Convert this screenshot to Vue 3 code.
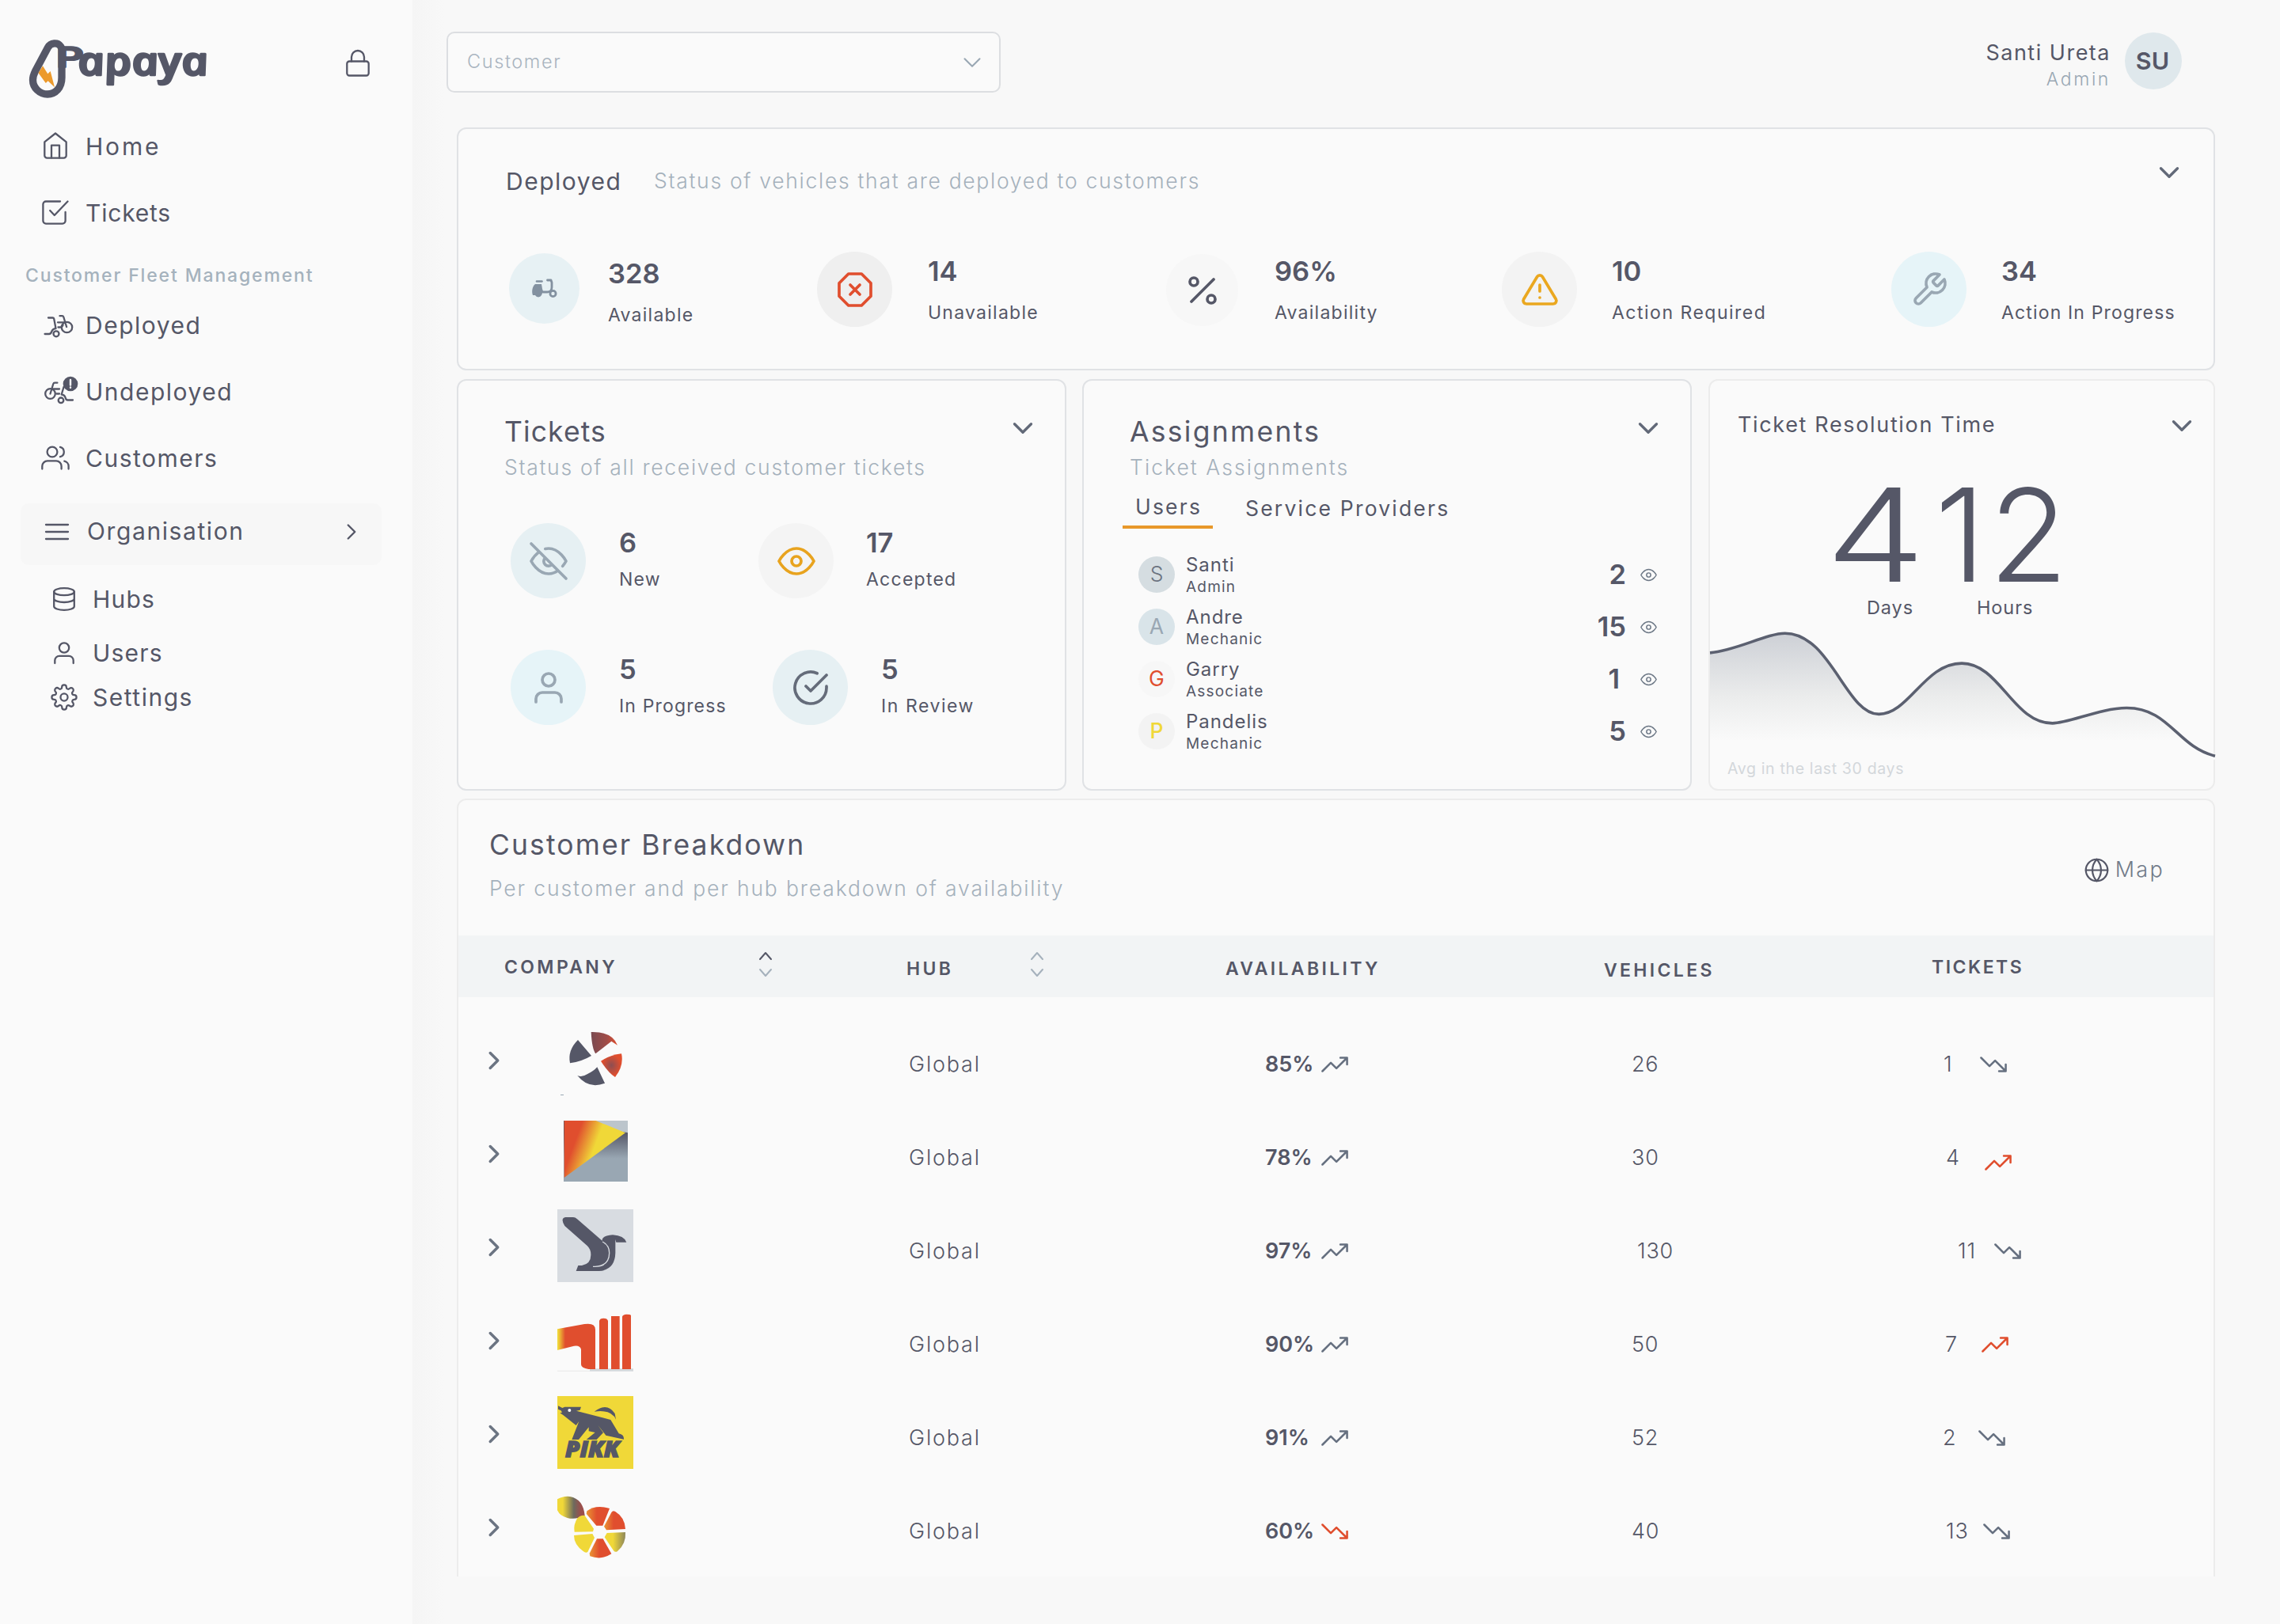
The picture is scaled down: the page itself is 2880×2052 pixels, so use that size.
<script setup>
const icons = {
  lock: { box: '0 0 30 34', body: '<rect x="1.3" y="14.5" width="27.4" height="18" rx="3"/><path d="M7 14.5V9a8 8 0 0 1 16 0v5.5"/>' },
  home: { box: '0 0 30 34', body: '<path d="M1.3 12.4 15 1.5l13.7 10.9v17a3.2 3.2 0 0 1-3.2 3.2h-21a3.2 3.2 0 0 1-3.2-3.2z"/><path d="M10 32.4V16.6h10v15.8"/>' },
  check: { box: '0 0 34 31', body: '<path d="M23 1.5H5A3.6 3.6 0 0 0 1.4 5v21A3.6 3.6 0 0 0 5 29.6h21a3.6 3.6 0 0 0 3.6-3.6V15"/><path d="m10.200 13 5.600 6L32.500 1.500"/>' },
  trike: { box: '0 0 36 28', body: '<path d="M5 3.500h5.500c1 0 1.500.4 1.700 1.300L14.500 17c-3 .2-4.500 1.800-5.500 4.500-.6 1.600-1.300 2.500-3 2.500H.6"/><circle cx="15" cy="23.800" r="3.500"/><circle cx="28.500" cy="15.500" r="6.700"/><path d="M19.500 1.200h3c1 0 1.500.4 1.800 1.300l3.800 12.500M17 9.300h10M17.500 15.500h3.200c1.500 0 2-1 2.800-2.800"/>' },
  trikeAlert: { box: '0 0 42 34', body: '<circle cx="7.500" cy="21.500" r="6.300"/><path d="M7.500 21.500 11.300 9c.3-.9.8-1.300 1.800-1.300h3.300M9 15.500h10M15.500 21.500h3.500M24.500 13 21.700 22.500c3 .2 4.300 1.500 5 4.300.4 1.800 1 2.700 2.700 2.700H36"/><circle cx="21" cy="29.800" r="3.300"/><circle class="solid" cx="33" cy="9" r="8.200"/><path class="knock" d="M33 4v6.500M33 13.500v.3"/>' },
  users: { box: '0 0 36 30', body: '<circle cx="14" cy="8" r="6.400"/><path d="M24 1.800a6.400 6.400 0 0 1 0 12.400M1.300 29.500V26a6.600 6.600 0 0 1 6.600-6.600H19a6.600 6.600 0 0 1 6.600 6.600v3.500M29.300 19.600a6.600 6.600 0 0 1 5.300 6.500v3.400"/>' },
  menu: { box: '0 0 30 22', body: '<path d="M1 2h28M1 11h28M1 20h28"/>' },
  hubs: { box: '0 0 28 30', body: '<ellipse cx="14" cy="5.700" rx="12.800" ry="4.500"/><path d="M1.200 5.700v18.600c0 2.500 5.700 4.500 12.800 4.500s12.800-2 12.800-4.500V5.700M1.200 14.500c0 2.500 5.700 4.500 12.800 4.500s12.800-2 12.800-4.500"/>' },
  person: { box: '0 0 26 28', body: '<circle cx="13" cy="7.500" r="6.200"/><path d="M1.300 27v-3.500a5.700 5.700 0 0 1 5.700-5.700h12a5.700 5.700 0 0 1 5.700 5.700V27"/>' },
  gear: { box: '0 0 24 24', body: '<circle cx="12" cy="12" r="3.200"/><path d="M19.400 15a1.650 1.650 0 0 0 .33 1.820l.06.06a2 2 0 1 1-2.830 2.830l-.06-.06a1.650 1.650 0 0 0-2.800 1.170V21a2 2 0 1 1-4 0v-.09a1.650 1.650 0 0 0-2.900-1.260l-.06.06a2 2 0 1 1-2.830-2.830l.06-.06A1.650 1.650 0 0 0 3.100 14H3a2 2 0 1 1 0-4h.09a1.650 1.650 0 0 0 1.260-2.900l-.06-.06a2 2 0 1 1 2.830-2.830l.06.06A1.650 1.650 0 0 0 10 3.100V3a2 2 0 1 1 4 0v.09a1.650 1.650 0 0 0 2.820 1.180l.06-.06a2 2 0 1 1 2.830 2.830l-.06.06A1.650 1.650 0 0 0 20.910 10H21a2 2 0 1 1 0 4h-.09a1.650 1.650 0 0 0-1.510 1z"/>' },
  right: { box: '0 0 24 24', body: '<path d="m9 18 6-6-6-6"/>' },
  down: { box: '0 0 24 24', body: '<path d="m6 9 6 6 6-6"/>' },
  scooter: { box: '0 0 32 25', body: '<path class="solid" stroke="none" d="M4 7h8l1 6 1 3-2 5a4.500 4.500 0 0 1-8 0H1c-1.500-4-1-11 3-14z"/><path d="M6 3.500h6.500" stroke-width="2.600"/><path d="M19.500 2H24l1 3v6c0 3-2 6-5.500 6H14" stroke-width="2.800"/><circle cx="26.500" cy="19" r="3.600" stroke-width="2.800"/>' },
  octagon: { box: '0 0 24 24', body: '<path d="M7.860 2h8.280L22 7.860v8.280L16.140 22H7.860L2 16.140V7.860zM15 9l-6 6M9 9l6 6"/>' },
  percent: { box: '0 0 24 24', body: '<path d="M19 5 5 19"/><circle cx="6.500" cy="6.500" r="2.500"/><circle cx="17.500" cy="17.500" r="2.500"/>' },
  warn: { box: '0 0 24 24', body: '<path d="M10.290 3.860 1.820 18a2 2 0 0 0 1.710 3h16.940a2 2 0 0 0 1.710-3L13.710 3.860a2 2 0 0 0-3.420 0zM12 9v4M12 17h.01"/>' },
  wrench: { box: '0 0 24 24', body: '<path d="M14.700 6.300a1 1 0 0 0 0 1.400l1.600 1.600a1 1 0 0 0 1.400 0l3.770-3.770a6 6 0 0 1-7.940 7.940l-6.910 6.910a2.120 2.120 0 0 1-3-3l6.910-6.910a6 6 0 0 1 7.940-7.940z"/>' },
  eyeOff: { box: '0 0 24 24', body: '<path d="M17.940 17.940A10.070 10.070 0 0 1 12 20c-7 0-11-8-11-8a18.450 18.450 0 0 1 5.060-5.940M9.900 4.240A9.120 9.120 0 0 1 12 4c7 0 11 8 11 8a18.500 18.500 0 0 1-2.160 3.190m-6.720-1.070a3 3 0 1 1-4.240-4.240M1 1l22 22"/>' },
  eye: { box: '0 0 24 24', body: '<path d="M1 12s4-8 11-8 11 8 11 8-4 8-11 8-11-8-11-8z"/><circle cx="12" cy="12" r="3"/>' },
  user: { box: '0 0 24 24', body: '<path d="M20 21v-2a4 4 0 0 0-4-4H8a4 4 0 0 0-4 4v2"/><circle cx="12" cy="7" r="4"/>' },
  done: { box: '0 0 24 24', body: '<path d="M22 11.080V12a10 10 0 1 1-5.930-9.140M22 4 12 14.010l-3-3"/>' },
  globe: { box: '0 0 24 24', body: '<circle cx="12" cy="12" r="10"/><path d="M2 12h20M12 2a15.300 15.300 0 0 1 4 10 15.300 15.300 0 0 1-4 10 15.300 15.300 0 0 1-4-10 15.300 15.300 0 0 1 4-10z"/>' },
  trendUp: { box: '0 0 24 24', body: '<path d="m23 6-9.500 9.500-5-5L1 18M17 6h6v6"/>' },
  trendDown: { box: '0 0 24 24', body: '<path d="m23 18-9.500-9.500-5 5L1 6M17 18h6v-6"/>' }
}

const mainNav = [
  { label: 'Home', icon: 'home', cls: 'i-home', row: 'home' },
  { label: 'Tickets', icon: 'check', cls: 'i-check', row: 'tick' }
]
const fleetNav = [
  { label: 'Deployed', icon: 'trike', cls: 'i-trike' },
  { label: 'Undeployed', icon: 'trikeAlert', cls: 'i-alert' },
  { label: 'Customers', icon: 'users', cls: 'i-users' }
]
const subNav = [
  { label: 'Hubs', icon: 'hubs', cls: 'i-hubs' },
  { label: 'Users', icon: 'person', cls: 'i-person' },
  { label: 'Settings', icon: 'gear', cls: 'i-gear' }
]
const deployed = [
  { value: '328', label: 'Available', icon: 'scooter', cls: 'd1' },
  { value: '14', label: 'Unavailable', icon: 'octagon', cls: 'd2' },
  { value: '96%', label: 'Availability', icon: 'percent', cls: 'd3' },
  { value: '10', label: 'Action Required', icon: 'warn', cls: 'd4' },
  { value: '34', label: 'Action In Progress', icon: 'wrench', cls: 'd5' }
]
const tickets = [
  { value: '6', label: 'New', icon: 'eyeOff', cls: 't1' },
  { value: '17', label: 'Accepted', icon: 'eye', cls: 't2' },
  { value: '5', label: 'In Progress', icon: 'user', cls: 't3' },
  { value: '5', label: 'In Review', icon: 'done', cls: 't4' }
]
const people = [
  { name: 'Santi', role: 'Admin', count: 2, cls: 'p1' },
  { name: 'Andre', role: 'Mechanic', count: 15, cls: 'p2' },
  { name: 'Garry', role: 'Associate', count: 1, cls: 'p3' },
  { name: 'Pandelis', role: 'Mechanic', count: 5, cls: 'p4' }
]
const rows = [
  { id: 1, avail: '85%', up: true, vehicles: 26, tickets: 1, tUp: false },
  { id: 2, avail: '78%', up: true, vehicles: 30, tickets: 4, tUp: true },
  { id: 3, avail: '97%', up: true, vehicles: 130, tickets: 11, tUp: false },
  { id: 4, avail: '90%', up: true, vehicles: 50, tickets: 7, tUp: true },
  { id: 5, avail: '91%', up: true, vehicles: 52, tickets: 2, tUp: false },
  { id: 6, avail: '60%', up: false, vehicles: 40, tickets: 13, tUp: false }
]
</script>

<template>
  <div class="app">
    <aside class="sidebar">
      <div class="brand">
        <svg class="logo" viewBox="0 0 230 80">
          <path class="drop" d="M43 14V50C43 63 35 71 25 71S6.500 63 6.500 53C6.500 49 7.500 46 9.500 42L25.500 12C29 5.500 38 5.500 41 10Q43 12 43 15" />
          <path class="bolt" d="M19 35.300 25.300 45.300 28.700 42 34 62.300 25.600 54.300 22.800 57 13.500 44.300z" />
          <text class="mark-p" x="36" y="37" textLength="35" lengthAdjust="spacingAndGlyphs">P</text>
          <g transform="translate(66 47) skewX(12)">
            <text class="mark-rest" x="0" y="0" textLength="165" lengthAdjust="spacingAndGlyphs">apaya</text>
          </g>
        </svg>
        <svg class="ic lock" :viewBox="icons.lock.box" v-html="icons.lock.body" />
      </div>
      <nav>
        <a v-for="n in mainNav" :key="n.label" class="nav" :class="n.row">
          <span class="cell"><svg class="ic" :class="n.cls" :viewBox="icons[n.icon].box" v-html="icons[n.icon].body" /></span><span class="lbl">{{ n.label }}</span>
        </a>
        <div class="section">Customer Fleet Management</div>
        <a v-for="n in fleetNav" :key="n.label" class="nav">
          <span class="cell"><svg class="ic" :class="n.cls" :viewBox="icons[n.icon].box" v-html="icons[n.icon].body" /></span><span class="lbl">{{ n.label }}</span>
        </a>
        <a class="nav org">
          <span class="cell"><svg class="ic i-menu" :viewBox="icons.menu.box" v-html="icons.menu.body" /></span><span class="lbl">Organisation</span>
          <svg class="ic i-right" :viewBox="icons.right.box" v-html="icons.right.body" />
        </a>
        <a v-for="n in subNav" :key="n.label" class="nav sub">
          <span class="cell"><svg class="ic" :class="n.cls" :viewBox="icons[n.icon].box" v-html="icons[n.icon].body" /></span><span>{{ n.label }}</span>
        </a>
      </nav>
    </aside>

    <main class="main">
      <header class="top">
        <div class="select">
          <span>Customer</span>
          <svg class="ic" :viewBox="icons.down.box" v-html="icons.down.body" />
        </div>
        <div class="account">
          <div class="who"><span class="full">Santi Ureta</span><span class="role">Admin</span></div>
          <div class="badge">SU</div>
        </div>
      </header>

      <section class="card deployed">
        <div class="head">
          <h2>Deployed</h2>
          <p>Status of vehicles that are deployed to customers</p>
          <svg class="ic chev" :viewBox="icons.down.box" v-html="icons.down.body" />
        </div>
        <div class="stats">
          <div v-for="s in deployed" :key="s.label" class="stat" :class="s.cls">
            <span class="disc"><svg class="ic" :viewBox="icons[s.icon].box" v-html="icons[s.icon].body" /></span>
            <div class="txt"><b>{{ s.value }}</b><span>{{ s.label }}</span></div>
          </div>
        </div>
      </section>

      <div class="trio">
        <section class="card tickets">
          <div class="head2">
            <div><h2>Tickets</h2><p>Status of all received customer tickets</p></div>
            <svg class="ic chev" :viewBox="icons.down.box" v-html="icons.down.body" />
          </div>
          <div class="tgrid">
            <div v-for="s in tickets" :key="s.label" class="stat" :class="s.cls">
              <span class="disc"><svg class="ic" :viewBox="icons[s.icon].box" v-html="icons[s.icon].body" /></span>
              <div class="txt"><b>{{ s.value }}</b><span>{{ s.label }}</span></div>
            </div>
          </div>
        </section>

        <section class="card assign">
          <div class="head2">
            <div><h2>Assignments</h2><p>Ticket Assignments</p></div>
            <svg class="ic chev" :viewBox="icons.down.box" v-html="icons.down.body" />
          </div>
          <div class="tabs"><span class="tab on">Users</span><span class="tab">Service Providers</span></div>
          <div class="people">
            <div v-for="p in people" :key="p.name" class="person" :class="p.cls">
              <span class="ava">{{ p.name[0] }}</span>
              <div class="pn"><span class="nm">{{ p.name }}</span><span class="rl">{{ p.role }}</span></div>
              <b>{{ p.count }}</b>
              <svg class="ic" :viewBox="icons.eye.box" v-html="icons.eye.body" />
            </div>
          </div>
        </section>

        <section class="card time">
          <div class="thead">
            <h3>Ticket Resolution Time</h3>
            <svg class="ic chev" :viewBox="icons.down.box" v-html="icons.down.body" />
          </div>
          <div class="big">
            <div class="unit days"><strong>4</strong><span>Days</span></div>
            <div class="unit hours"><strong>12</strong><span>Hours</span></div>
          </div>
          <svg class="chart" viewBox="0 0 640 170">
            <defs>
              <linearGradient id="fade" x1="0" y1="0" x2="0" y2="1">
                <stop offset="0" stop-color="#cdd0d6" />
                <stop offset=".5" stop-color="#ebecec" />
                <stop offset=".85" stop-color="#fafafa" />
                <stop offset="1" stop-color="#fafafa" />
              </linearGradient>
            </defs>
            <path fill="url(#fade)" d="M0 34.700C33 32 72 10 95 10C153 10 172 112.500 214 112.500C252 112.500 272 48 319 48C367 48 384 124 434 124C455 124 495 104.600 528 104.600C582 104.600 592 154 640 165.500V170H0z" />
            <path class="line" d="M0 34.700C33 32 72 10 95 10C153 10 172 112.500 214 112.500C252 112.500 272 48 319 48C367 48 384 124 434 124C455 124 495 104.600 528 104.600C582 104.600 592 154 640 165.500" />
          </svg>
          <div class="avg">Avg in the last 30 days</div>
        </section>
      </div>

      <section class="card table">
        <div class="bhead">
          <div><h2>Customer Breakdown</h2><p>Per customer and per hub breakdown of availability</p></div>
          <a class="map"><svg class="ic" :viewBox="icons.globe.box" v-html="icons.globe.body" />Map</a>
        </div>
        <div class="cols">
          <span class="c1">COMPANY</span>
          <span class="sort"><svg class="ic" viewBox="0 0 16 32"><path class="asc" d="m1 10 7-8 7 8" /><path d="m1 23 7 8 7-8" /></svg></span>
          <span class="c2">HUB</span>
          <span class="sort"><svg class="ic" viewBox="0 0 16 32"><path d="m1 10 7-8 7 8" /><path d="m1 23 7 8 7-8" /></svg></span>
          <span class="c2">AVAILABILITY</span>
          <span class="c3">VEHICLES</span>
          <span class="c1 last">TICKETS</span>
        </div>
        <div v-for="r in rows" :key="r.id" class="row" :class="'r' + r.id">
          <span class="open"><svg class="ic" :viewBox="icons.right.box" v-html="icons.right.body" /></span>
          <span class="brandcell">
            <svg v-if="r.id === 1" viewBox="402 45 288 354">
              <defs><linearGradient id="g1"><stop offset="0" stop-color="#7a4a50" /><stop offset=".6" stop-color="#a04c48" /><stop offset="1" stop-color="#e04e2e" /></linearGradient>
              <radialGradient id="g2"><stop offset="0" stop-color="#8c4e52" /><stop offset=".9" stop-color="#e04e2e" /></radialGradient></defs>
              <path fill="#555767" d="M480 132 531 192Q495 214 450 220Q440 172 480 132zM553 235 582 296Q520 320 478 267Q495 275 515 262Q540 250 553 235z" />
              <path fill="url(#g1)" d="M530 102Q610 100 630 152L607 137 547 184Q533 165 530 102z" />
              <path fill="url(#g2)" d="M567 212Q600 190 645 184Q655 230 621 273Q595 257 567 212z" />
              <path fill="#99a7b3" d="M414 339h12v3h-12z" />
            </svg>
            <svg v-else-if="r.id === 2" viewBox="402 399 288 354">
              <defs><linearGradient id="g3" gradientUnits="userSpaceOnUse" x1="462" y1="535" x2="535" y2="562"><stop offset="0" stop-color="#e04e2e" /><stop offset="1" stop-color="#f0d838" /></linearGradient>
              <linearGradient id="g4" x1="0" y1="0" x2="0" y2="1"><stop offset=".2" stop-color="#555767" /><stop offset=".62" stop-color="#99a7b3" /></linearGradient></defs>
              <path fill="#bcc5cc" d="M426 438h243v231H426z" />
              <path fill="url(#g4)" d="M426 438v0L669 484V669H426z" />
              <path fill="url(#g3)" d="M428 438H548L660 484 428 654z" />
            </svg>
            <svg v-else-if="r.id === 3" viewBox="402 753 288 354">
              <path fill="#d8dce1" d="M402 774h288v276H402z" />
              <path fill="#555767" d="M433 804H462Q470 804 477 811L572 893Q570 874 612 871Q655 874 664 899L625 899 622 888V940Q620 1004 560 1008H473L481 987H495Q530 980 529 945Q529 925 515 912L430 837Q412 808 433 804z" />
              <path fill="none" stroke="#d8dce1" stroke-width="4" d="M573 897Q599 910 599 940Q598 990 545 991H537" />
            </svg>
            <svg v-else-if="r.id === 4" viewBox="402 27 288 354">
              <defs><linearGradient id="g5" gradientUnits="userSpaceOnUse" x1="402" y1="0" x2="432" y2="0"><stop offset=".1" stop-color="#f0d838" /><stop offset="1" stop-color="#e04e2e" /></linearGradient></defs>
              <path fill="#d3d7db" d="M525 298h165v10H525z" />
              <path fill="#ececec" d="M402 305h123v4H402z" />
              <path fill="url(#g5)" d="M402 148 505 129Q546 123 546 150V300H520Q492 296 492 282V225Q488 208 465 212L402 228z" />
              <path fill="#e04e2e" d="M561 300V117Q563 107 577 107Q592 107 594 117V300zM606 300V99H638V300zM648 300V101Q650 93 664 92Q679 92 681 96V300z" />
            </svg>
            <svg v-else-if="r.id === 5" viewBox="402 381 288 354">
              <path fill="#f0d838" d="M402 402h288v276H402z" />
              <path fill="#555767" d="M405 439 421 447 430 443H492L488 455 474 458 604 492 635 544Q655 548 654 566L586 551 570 530 556 513 576 541 551 567H512L545 540 521 535V520L483 567H457L484 498 473 513 425 475 412 466 420 464 416 457 405 452z" />
              <path fill="#555767" d="M542 461Q590 424 620 468L624 491Q608 452 542 461z" />
              <circle cx="448" cy="456" r="6" fill="#fff" />
              <text class="pikk" x="432" y="632" textLength="206" lengthAdjust="spacingAndGlyphs">PIKK</text>
            </svg>
            <svg v-else viewBox="402 735 288 354">
              <defs><linearGradient id="g6"><stop offset=".2" stop-color="#f0d838" /><stop offset=".6" stop-color="#6d6a5e" /><stop offset=".85" stop-color="#9a4f4c" /></linearGradient>
              <linearGradient id="g7"><stop offset="0" stop-color="#ea9433" /><stop offset=".45" stop-color="#e04e2e" /></linearGradient>
              <linearGradient id="g8"><stop offset=".4" stop-color="#f0d838" /><stop offset="1" stop-color="#8d865a" /></linearGradient></defs>
              <path fill="url(#g6)" d="M402 793Q425 780 450 783Q500 792 506 855Q470 872 440 864Q412 857 402 835z" />
              <path fill="url(#g7)" d="M514 838Q548 812 600 828L574 893H550L512 848z" />
              <path fill="url(#g7)" d="M607 843Q612 834 622 840Q658 862 660 906L588 910 579 896z" />
              <path fill="url(#g7)" d="M552 943H575L607 1000Q570 1025 526 1009L524 998z" />
              <path fill="#f0d838" d="M478 865Q490 852 506 855L540 905 537 916 467 917Q462 890 478 865zM465 930 535 924 543 939 517 993Q510 999 500 990Q465 965 465 930z" />
              <path fill="url(#g8)" d="M590 921 660 918Q663 962 630 990Q621 996 615 988L581 937z" />
            </svg>
          </span>
          <span class="hub">Global</span>
          <span class="av"><b>{{ r.avail }}</b><svg class="ic trend" :class="{ red: !r.up }" :viewBox="icons.trendUp.box" v-html="icons[r.up ? 'trendUp' : 'trendDown'].body" /></span>
          <span class="veh">{{ r.vehicles }}</span>
          <span class="tk"><span class="n">{{ r.tickets }}</span><svg class="ic trend" :class="{ red: r.tUp }" :viewBox="icons.trendUp.box" v-html="icons[r.tUp ? 'trendUp' : 'trendDown'].body" /></span>
        </div>
      </section>
    </main>
  </div>
</template>

<style>
body { background: #f8f8f8; }
.solid { fill: currentColor; }
.knock { stroke: #fafafa; stroke-width: 2.4; }
</style>

<style scoped>
* { box-sizing: border-box; }
.app { display: flex; width: 2880px; height: 2052px; overflow: hidden; background: #f8f8f8; color: #555767; font-family: Inter, "Open Sans", sans-serif; font-size: 28px; line-height: 1.2; }
h2, h3, p { margin: 0; font-weight: 400; }
b { font-weight: 600; }
.ic { fill: none; stroke: currentColor; stroke-width: 2; stroke-linecap: round; stroke-linejoin: round; flex: none; display: block; overflow: visible; }

.sidebar { width: 521px; flex: none; background: #fafafa; }
.brand { display: flex; height: 144px; padding: 48px 0 0 35px; }
.logo { width: 230px; height: 80px; flex: none; overflow: visible; }
.drop { fill: none; stroke: #555767; stroke-width: 9.300; stroke-linejoin: round; stroke-linecap: round; }
.bolt { fill: #ec9a2c; }
.mark-p { font-family: Inter, sans-serif; font-weight: 700; font-size: 36px; fill: #555767; stroke: #555767; stroke-width: 1.5; stroke-linejoin: round; }
.mark-rest { font-family: "Open Sans", sans-serif; font-style: italic; font-weight: 600; font-size: 50px; fill: #555767; stroke: #555767; stroke-width: 2.6; stroke-linejoin: round; }
.lock { width: 30px; height: 34px; margin: 15px 0 0 172px; stroke-width: 2.3; }

.nav { display: flex; align-items: center; height: 84px; padding-left: 50px; font-size: 30px; font-weight: 400; letter-spacing: 1.5px; }
.lbl { margin-bottom: 2px; }
.home { letter-spacing: 2.8px; }
.tick { letter-spacing: .8px; }
.cell { width: 58px; flex: none; }
.nav .ic { stroke-width: 2.3; }
.i-home { width: 30px; height: 34px; margin: 0 0 4px 5px; }
.i-check { width: 34px; height: 31px; margin: 0 0 4px 3px; }
.i-trike { width: 36px; height: 28px; margin-left: 6px; }
.i-alert { width: 42px; height: 34px; margin: 0 0 6px 6px; }
.i-users { width: 36px; height: 30px; margin: 0 0 4px 2px; }
.i-menu { width: 30px; height: 22px; margin-left: 6px; }
.section { height: 58px; padding: 21px 0 0 32px; font-size: 23px; line-height: 30px; font-weight: 500; letter-spacing: 1.850px; color: #a5b2bd; white-space: nowrap; }
.org { height: 78px; margin: 14px 39px 9px 26px; padding: 0 0 6px 25px; background: #f7f7f7; border-radius: 10px; letter-spacing: 1.600px; }
.org .cell { width: 59px; }
.org .i-right { width: 34px; height: 34px; margin-left: auto; margin-right: 21px; stroke-width: 1.7; }
.sub { height: 68px; padding-left: 58px; letter-spacing: 1.2px; }
.sub .cell { width: 59px; }
.sub:last-child { height: 44px; letter-spacing: 1.500px; }
.i-hubs { width: 28px; height: 30px; margin-left: 9px; }
.i-person { width: 26px; height: 28px; margin-left: 10px; }
.nav .i-gear { width: 34px; height: 34px; margin-left: 6px; stroke-width: 1.6; }

.main { flex: 1; padding-left: 56px; background: linear-gradient(90deg, #f5f5f5, #f8f8f8 40px); }
.top { display: flex; height: 161px; padding-top: 40px; justify-content: space-between; width: 2180px; }
.select { display: flex; align-items: center; justify-content: space-between; width: 700px; height: 77px; margin-left: -13px; padding: 0 15px 0 24px; border: 2px solid #dcdee1; border-radius: 10px; background: #fafafa; color: #a9b4bf; font-size: 23.5px; font-weight: 300; letter-spacing: 1.6px; }
.select .ic { width: 38px; height: 38px; stroke-width: 1.3; color: #99a7b3; }
.account { display: flex; gap: 18px; }
.who { display: flex; flex-direction: column; align-items: flex-end; padding-top: 10px; }
.full { font-size: 27px; line-height: 34px; letter-spacing: 1.5px; }
.role { font-size: 23px; line-height: 32px; letter-spacing: 2.600px; font-weight: 300; color: #99a7b3; }
.badge { width: 72px; height: 72px; margin: 1px 1px 0 0; border-radius: 50%; background: #dfe8ec; font-size: 30.500px; font-weight: 600; display: flex; align-items: center; justify-content: center; padding-right: 2px; }

.card { border: 2px solid #e0e2e5; border-radius: 12px; background: #fafafa; }
.chev { width: 42px; height: 42px; stroke-width: 1.900; color: #626978; }
.deployed { width: 2221px; height: 307px; margin-bottom: 11px; }
.deployed .head { display: flex; height: 155px; padding: 48px 35px 0 60px; }
.deployed h2 { width: 187px; font-size: 30px; line-height: 36px; letter-spacing: 1.5px; }
.deployed p { font-size: 26.500px; font-weight: 300; line-height: 34px; letter-spacing: 1.7px; color: #a5b1bc; }
.deployed .chev { margin: -14px 0 0 auto; }
.stats { display: grid; grid-template-columns: 389px 441px 424px 492px 1fr; padding-left: 64px; align-items: start; }
.stat { display: flex; }
.disc { width: 95px; height: 95px; border-radius: 50%; display: flex; align-items: center; justify-content: center; flex: none; }
.disc .ic { width: 48px; height: 48px; stroke-width: 1.85; }
.txt { display: flex; flex-direction: column; gap: 15px; margin: 3px 0 0 45px; white-space: nowrap; }
.txt b { font-size: 34.5px; line-height: 44px; }
.txt span { font-size: 23px; line-height: 30px; letter-spacing: 1.25px; }
.d1 .disc { width: 89px; height: 89px; margin-top: 2px; background: #e7f1f4; color: #8391a0; }
.d1 .disc .ic { width: 32px; height: 25px; }
.d1 .txt { margin: 6px 0 0 36px; }
.d2 .disc { background: #efefef; color: #e04e2e; }
.d3 .disc { width: 91px; height: 91px; margin-top: 3px; background: #f7f7f7; color: #555767; }
.d3 .txt { margin-left: 46px; }
.d4 .disc { background: #f3f3f3; color: #eaa71f; }
.d4 .txt { margin-left: 44px; }
.d4 .txt span { letter-spacing: 1.5px; }
.d5 .disc, .t3 .disc { background: #e6f4f8; color: #99a7b3; }
.d5 .txt { margin-left: 44px; }
.d5 .txt span { letter-spacing: 1.15px; }

.trio { display: flex; height: 520px; margin-bottom: 10px; }
.tickets, .assign { width: 770px; margin-right: 20px; }
.assign { margin-right: 21px; }
.head2 { display: flex; justify-content: space-between; height: 126px; padding: 41px 32px 0 58px; }
.head2 h2 { font-size: 35.5px; line-height: 47px; letter-spacing: 1.1px; }
.head2 p { font-size: 26.500px; line-height: 42px; font-weight: 300; color: #a5b1bc; letter-spacing: 1.7px; }
.head2 .chev { margin-top: -2px; }
.assign h2 { letter-spacing: 2.3px; }
.assign p { letter-spacing: 2.050px; }
.tgrid { display: grid; grid-template-columns: 313px 1fr; grid-template-rows: 160px 100px; padding: 54px 0 0 66px; }
.tgrid .txt { gap: 9px; margin-left: 42px; }
.t2 .txt { margin-left: 41px; }
.t1 .disc, .t4 .disc { background: #e6f0f3; color: #99a7b3; }
.t2 .disc { background: #f4f4f4; color: #e8a31e; }
.t4 { margin-left: 18px; }
.t4 .disc { color: #656c7a; }
.t3 .txt span { letter-spacing: 1.150px; }
.t4 .txt span { letter-spacing: 1.55px; }

.tabs { display: flex; height: 61px; padding-left: 49px; font-size: 26.500px; letter-spacing: 1.9px; }
.tab { padding: 18px 0 0 41px; line-height: 34px; letter-spacing: 2.2px; }
.tab.on { width: 114px; padding: 16px 0 0 16px; border-bottom: 4px solid #e8982a; }
.people { padding: 25px 42px 0 59px; }
.person { display: flex; align-items: center; height: 66px; }
.ava { width: 46px; height: 46px; margin-left: 10px; border-radius: 50%; display: flex; align-items: center; justify-content: center; flex: none; font-size: 26.500px; }
.p1 .ava { background: #d5dde1; color: #6b7380; font-weight: 300; }
.p2 .ava { background: #d9e4e9; color: #99a7b3; }
.p3 .ava { background: #f7f7f7; color: #e04e2e; }
.p4 .ava { background: #f3f3f3; color: #f0d838; font-weight: 500; }
.pn { display: flex; flex-direction: column; flex: 1; padding: 2px 0 0 14px; }
.nm { font-size: 24px; line-height: 28px; letter-spacing: .95px; }
.rl { font-size: 19px; line-height: 27px; letter-spacing: 1.200px; }
.person b { font-size: 34.5px; margin-right: 18px; }
.p3 b { margin-right: 26px; }
.person .ic { width: 21px; height: 21px; stroke-width: 1.7; color: #6d7886; }

.time { width: 640px; border-color: #ececec; display: flex; flex-direction: column; }
.thead { display: flex; justify-content: space-between; padding: 36px 19px 0 35px; height: 80px; }
.thead h3 { font-size: 27px; line-height: 40px; letter-spacing: 1.65px; }
.big { display: flex; height: 229px; }
.unit { display: flex; flex-direction: column; }
.days { width: 286px; padding-left: 146px; }
.unit strong { font-weight: 300; font-size: 163px; line-height: 120px; margin-top: 55px; }
.days strong { width: 100px; transform: scaleX(1.23); transform-origin: left; }
.hours strong { letter-spacing: 4px; margin-left: -2px; }
.unit span { font-size: 23.5px; line-height: 30px; letter-spacing: .9px; margin-top: 17px; }
.days span { padding-left: 52px; }
.hours span { padding-left: 51px; }
.chart { width: 638px; height: 170px; flex: none; overflow: visible; }
.line { fill: none; stroke: #5b6070; stroke-width: 3.6; }
.avg { padding-left: 22px; margin-top: -2px; font-size: 19.5px; line-height: 26px; letter-spacing: .65px; color: #d3d7db; }

.table { width: 2221px; height: 983px; border-color: #ececec; border-bottom: 0; border-radius: 12px 12px 0 0; }
.bhead { display: flex; justify-content: space-between; height: 171px; padding: 33px 62px 0 39px; }
.bhead h2 { font-size: 35.5px; line-height: 47px; letter-spacing: 2.1px; }
.bhead p { font-size: 26.500px; line-height: 34px; margin-top: 14px; font-weight: 300; letter-spacing: 1.870px; color: #a5b1bc; }
.map { display: flex; align-items: center; height: 40px; margin-top: 35px; gap: 7px; font-size: 27px; font-weight: 300; letter-spacing: 2.3px; color: #717b89; }
.map .ic { width: 33px; height: 33px; stroke-width: 1.6; color: #555767; }
.cols { display: grid; grid-template-columns: 322px 186px 157px 246px 478px 414px 1fr; height: 78px; padding: 20px 0 0 58px; background: #f2f4f5; font-size: 23px; line-height: 38px; font-weight: 600; letter-spacing: 3.350px; }
.c1 { margin-top: 1px; }
.c2 { margin-top: 3px; }
.c3 { margin-top: 5px; }
.cols .last { letter-spacing: 2.500px; }
.sort .ic { width: 16px; height: 32px; color: #a5b1bc; }
.sort .asc { stroke: #555767; }
.row { display: grid; grid-template-columns: 125px 444px 450px 463px 394px 1fr; height: 118px; align-items: center; font-size: 27px; }
.r1 { margin-top: 26px; }
.open { padding-left: 26px; margin-top: -10px; }
.open .ic { width: 38px; height: 38px; stroke-width: 2.2; color: #6b7482; }
.brandcell { margin-top: -3px; }
.brandcell svg { width: 96px; height: 118px; display: block; }
.pikk { font-family: "Open Sans", sans-serif; font-weight: 800; font-style: italic; font-size: 84px; fill: #555767; stroke: #555767; stroke-width: 4; }
.hub { font-weight: 300; letter-spacing: 1.8px; }
.av { display: flex; align-items: center; }
.av b { width: 71px; }
.trend { width: 34px; height: 34px; stroke-width: 1.8; color: #667080; }
.trend.red { color: #e04e2e; }
.veh, .tk { font-weight: 300; letter-spacing: .8px; }
.r3 .veh { padding-left: 7px; }
.tk { display: flex; align-items: center; }
.tk .n { width: 46px; }
.r2 .tk .n { width: 52px; padding-left: 3px; }
.r2 .tk .ic { margin-top: 12px; }
.r3 .tk .n { width: 64px; padding-left: 18px; }
.r4 .tk .n { width: 48px; padding-left: 2px; }
.r5 .tk .n { width: 44px; margin-left: -1px; margin-right: 1px; }
.r6 .tk .n { width: 50px; padding-left: 3px; }
</style>
